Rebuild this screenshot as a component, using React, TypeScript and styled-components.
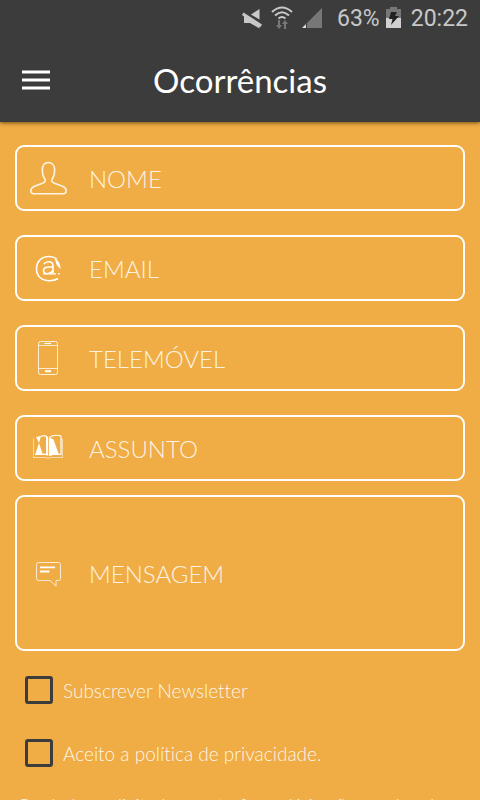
import React from "react";
import styled, { createGlobalStyle } from "styled-components";

const GlobalStyle = createGlobalStyle`
  * { box-sizing: border-box; }
  body {
    margin: 0;
    background: #f0ad45;
    font-family: Lato, "Open Sans", sans-serif;
    font-variant-ligatures: none;
    color: #fff;
  }
`;

const Screen = styled.div`
  height: 100vh;
  display: flex;
  flex-direction: column;
  background: #f0ad45;
`;

const Header = styled.header`
  flex: none;
  position: relative;
  z-index: 1;
  background: #3c3c3c;
  box-shadow: 0 1px 4px rgba(60, 40, 0, 0.7);
`;

const StatusBar = styled.div`
  height: 38px;
  padding: 0 12px 0 0;
  display: flex;
  justify-content: flex-end;
  align-items: center;
  font: 400 23px/36px Roboto, sans-serif;
  color: #c8c8c8;
`;

const StatusIcon = styled.svg<{ $gap: number }>`
  flex: none;
  margin: 0 ${(p) => p.$gap}px 3px 0;
`;

const StatusText = styled.span<{ $gap?: number }>`
  margin-right: ${(p) => p.$gap ?? 0}px;
`;

const TitleBar = styled.div`
  height: 84px;
  padding: 0 20px;
  display: grid;
  grid-template-columns: 32px 1fr 32px;
  align-items: center;
`;

const MenuButton = styled.button`
  width: 32px;
  height: 32px;
  padding: 0 2px;
  border: 0;
  background: none;
  display: flex;
  align-items: center;
`;

const Title = styled.h1`
  margin: 0;
  font-size: 33px;
  line-height: 48px;
  font-weight: 400;
  text-align: center;
`;

const Form = styled.form`
  flex: 1;
  min-height: 0;
  overflow-y: auto;
  scrollbar-width: none;
  padding: 23px 15px 0;
  display: flex;
  flex-direction: column;
`;

const Fields = styled.div`
  flex: none;
  display: flex;
  flex-direction: column;
  gap: 24px;
  margin-bottom: 14px;
`;

const Field = styled.label<{ $tall?: boolean }>`
  flex: none;
  height: ${(p) => (p.$tall ? 156 : 66)}px;
  padding: 0 12px;
  border: 2px solid #fff;
  border-radius: 9px;
  display: flex;
  align-items: center;
  gap: 20px;
`;

const FieldIcon = styled.svg`
  flex: none;
  width: 40px;
  height: 40px;
  fill: none;
  stroke: #fff;
  stroke-linejoin: round;
`;

const Input = styled.input`
  flex: 1;
  min-width: 0;
  padding: 2px 0 0;
  border: 0;
  outline: 0;
  background: none;
  color: #fff;
  font: 300 24px/36px Lato, sans-serif;
  &::placeholder { color: #fff; opacity: 0.85; }
`;

const TextArea = styled.textarea`
  flex: 1;
  min-width: 0;
  height: 38px;
  padding: 2px 0 0;
  border: 0;
  outline: 0;
  resize: none;
  overflow: hidden;
  background: none;
  color: #fff;
  font: 300 24px/36px Lato, sans-serif;
  &::placeholder { color: #fff; opacity: 0.85; }
`;

const Options = styled.div`
  flex: none;
  display: flex;
  flex-direction: column;
  gap: 33px;
  padding: 25px 10px 0;
`;

const Option = styled.label`
  display: flex;
  align-items: flex-start;
  gap: 10px;
  height: 30px;
  font-size: 19px;
  line-height: 30px;
  font-weight: 300;
  color: rgba(255, 255, 255, 0.9);
`;

const Checkbox = styled.input`
  appearance: none;
  flex: none;
  width: 28px;
  height: 28px;
  margin: 0;
  border: 3px solid #3c3c3c;
  border-radius: 3px;
  &:checked { background: #3c3c3c; }
`;

const Note = styled.p`
  flex: none;
  margin: 22px 0 0;
  padding: 0 2px;
  font-size: 19px;
  line-height: 30px;
  font-weight: 300;
  color: rgba(255, 255, 255, 0.9);
`;

const icons = {
  person: (
    <path strokeWidth="1.600" strokeOpacity=".85" d="M19.500 4.500c-4 0-6.200 3.200-6.200 8 0 4 1 6.600 2.800 9.200.8 1.600-.2 2.400-2 3.200L5 28.500c-2.500 1.200-3.200 2.800-3.200 4.300 0 2 1.400 3 3.200 3h29c1.800 0 3.200-1 3.200-3 0-1.500-.7-3.100-3.200-4.300l-9.100-3.600c-1.800-.8-2.800-1.600-2-3.200 1.800-2.600 2.800-5.200 2.800-9.200 0-4.800-2.200-8-6.200-8z" />
  ),
  at: (
    <>
      <path strokeWidth="1.600" d="M29 30.500c-2 1.500-5 2.300-8.500 2.300C12.500 32.800 7.500 28 7.500 21c0-7.500 5-12.500 12.500-12.500 3.500 0 6 1 7.800 2.500" />
      <path strokeWidth="1.600" d="M15 16c1-1.500 2.500-2.200 4.500-2.200 3 0 4.500 1.500 4.500 4.200v7.500M24 19h-3.500c-4 0-6 1.200-6 3.500 0 2 1.500 3.200 3.700 3.200 2.500 0 4.500-1.200 5.800-3.200" />
      <path strokeWidth="1.200" d="M14 25.800h4m2 0h7m2 0h2" />
      <path fill="#fff" stroke="none" d="M26 10.500c3.500 2 5.700 5.500 5.500 10.500-1.500-1.500-3.500-3-4.500-6z" />
    </>
  ),
  phone: (
    <>
      <rect x="9.500" y="3.500" width="19" height="33" rx="2" strokeOpacity=".8" />
      <path strokeOpacity=".75" d="M9.500 7.500h19M9.500 30.500h19" />
      <path strokeWidth="1.200" d="M15.500 5.500h6.500" />
      <path strokeWidth="2" d="M16 33.200h6" />
    </>
  ),
  book: (
    <>
      <path strokeOpacity=".55" d="M4.500 10.500v19h11.500q3 0 3 1.500 0-1.500 3-1.500h11.500v-19" />
      <path strokeWidth="1.200" d="M12 8.500q4-2 6.500 1v17.500q-3-1.500-6.500-.5M20.500 9.500Q25 6 32 8v18.500q-7-1-11.500 1z" />
      <path fill="#fff" stroke="none" d="M7 9l5-1-2 7zM10 15l4 12H6zM17 9h2v18h-2zM20.500 9.500l4 2L30 27h-9.500z" />
    </>
  ),
  message: (
    <>
      <path strokeOpacity=".75" d="M9.500 9.500h20q2 0 2 2v14q0 2-2 2h-2.500v5.500l-6-5.500H9.500q-2 0-2-2v-14q0-2 2-2z" />
      <path strokeWidth="1.800" d="M11 14.300h15M11 18.500h9.500" />
    </>
  ),
};

const fields = [
  { id: "nome", label: "NOME", icon: icons.person, type: "text" },
  { id: "email", label: "EMAIL", icon: icons.at, type: "email" },
  { id: "telemovel", label: "TELEMÓVEL", icon: icons.phone, type: "tel" },
  { id: "assunto", label: "ASSUNTO", icon: icons.book, type: "text" },
];

export default function App() {
  return (
    <Screen>
      <GlobalStyle />
      <Header>
        <StatusBar>
          <StatusIcon $gap={8} width="22" height="22" viewBox="0 0 22 22" fill="#c8c8c8">
            <path d="M10 7.500 18.500 2v10.500z" />
            <path d="M2.500 5.500 21 17.500l-1.500 2.500-1-.5v2L9 16H3V9.500L1 8z" />
          </StatusIcon>
          <StatusIcon $gap={8} width="22" height="24" viewBox="0 0 22 24" fill="none" stroke="#c8c8c8" strokeWidth="2">
            <path d="M1 6q10-9 20 0M4 9.500q7-6.500 14 0M7.500 12.500q3.500-3 7 0" />
            <path fill="#777" stroke="none" d="M7 14h2v5h2l-3 4-3-4h2zM13 23h2v-5h2l-3-4-3 4h2z" />
          </StatusIcon>
          <StatusIcon $gap={14} width="22" height="22" viewBox="0 0 22 22">
            <path fill="#777" d="M21 1v20H1z" />
            <path fill="#e0e0e0" stroke="#3c3c3c" d="M5.500 16v5.500H0z" />
          </StatusIcon>
          <StatusText $gap={6}>63%</StatusText>
          <StatusIcon $gap={10} width="15" height="22" viewBox="0 0 15 22">
            <path fill="#777" d="M4 0h7v2h4v10H0V2h4z" />
            <path fill="#d0d0d0" d="M0 11h15v10H0z" />
            <path fill="#222" d="M5 5h6L9 9h4l-8 9 1.500-6H3z" />
          </StatusIcon>
          <StatusText>20:22</StatusText>
        </StatusBar>
        <TitleBar>
          <MenuButton type="button" aria-label="Menu">
            <svg width="28" height="22" viewBox="0 0 28 22">
              <path stroke="#fff" strokeOpacity=".5" strokeWidth="4" d="M0 3h28M0 11h28M0 19h28" />
              <path stroke="#fff" strokeWidth="2" d="M0 3h28M0 11h28M0 19h28" />
            </svg>
          </MenuButton>
          <Title>Ocorrências</Title>
        </TitleBar>
      </Header>
      <Form>
        <Fields>
          {fields.map((f) => (
            <Field key={f.id} htmlFor={f.id}>
              <FieldIcon viewBox="0 0 40 40">{f.icon}</FieldIcon>
              <Input id={f.id} type={f.type} placeholder={f.label} aria-label={f.label} />
            </Field>
          ))}
        </Fields>
        <Field $tall htmlFor="mensagem">
          <FieldIcon viewBox="0 0 40 40">{icons.message}</FieldIcon>
          <TextArea id="mensagem" rows={1} placeholder="MENSAGEM" aria-label="MENSAGEM" />
        </Field>
        <Options>
          <Option>
            <Checkbox type="checkbox" />
            Subscrever Newsletter
          </Option>
          <Option>
            <Checkbox type="checkbox" />
            Aceito a política de privacidade.
          </Option>
        </Options>
        <Note>Os dados solicitados neste formulário são usados de</Note>
      </Form>
    </Screen>
  );
}
